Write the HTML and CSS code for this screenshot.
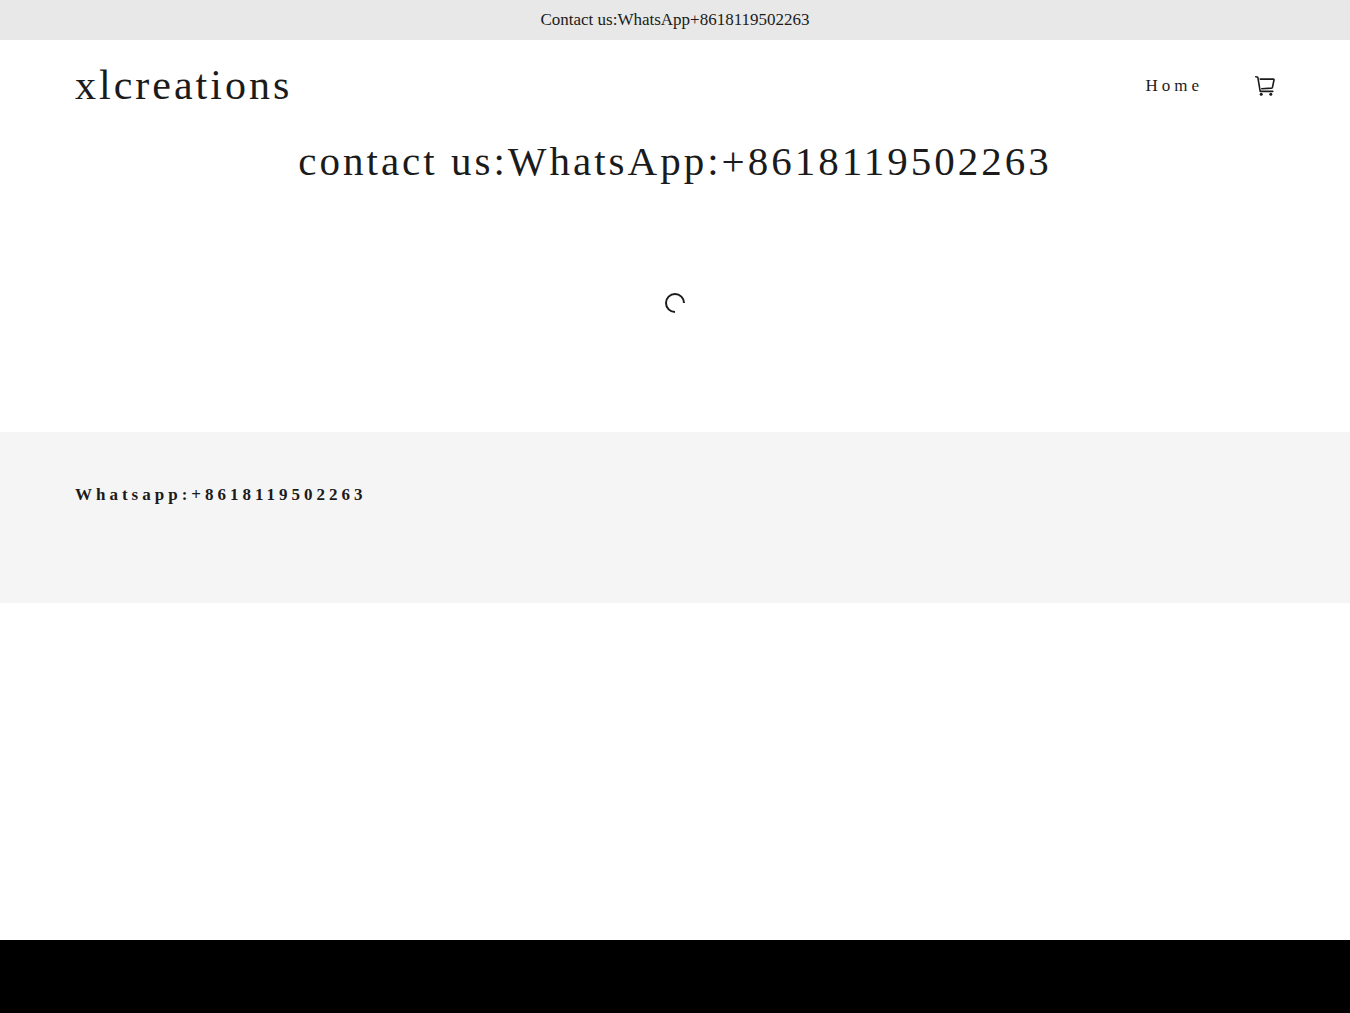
FILE: index.html
```
<!DOCTYPE html>
<html lang="en">
<head>
    <meta charset="UTF-8">
    <meta name="viewport" content="width=device-width, initial-scale=1.0">
    <title>xlcreations</title>
    <link rel="stylesheet" href="styles.css">
</head>
<body>

    <div class="announcement">Contact us:WhatsApp+8618119502263</div>

    <header class="header">
        <a class="logo" href="#">xlcreations</a>
        <nav class="nav">
            <a class="nav-link" href="#">Home</a>
            <button class="cart-button" type="button" aria-label="Cart">
                <svg width="20" height="20" viewBox="0 0 20 20" fill="none" stroke="#1b1b1b" stroke-width="1.6" stroke-linecap="round" stroke-linejoin="round">
                    <path d="M0.8 0.8L2.8 1.2L5.2 15.4H17.8"/>
                    <path d="M5.2 3.1H18.4Q19.2 3.1 19 4L17.5 11.2Q17.3 12 16.5 12.1L6.8 12.7"/>
                    <circle cx="6.2" cy="18.3" r="1.5" fill="#1b1b1b" stroke="none"/>
                    <circle cx="15.8" cy="18.3" r="1.5" fill="#1b1b1b" stroke="none"/>
                </svg>
            </button>
        </nav>
    </header>

    <main class="main">
        <h1 class="title">contact us:WhatsApp:+8618119502263</h1>
        <div class="loading">
            <svg width="20" height="20" viewBox="0 0 20 20" fill="none" stroke="#1b1b1b" stroke-width="2">
                <path d="M10 19A9 9 0 1 1 19 10"/>
            </svg>
        </div>
    </main>

    <footer class="footer">
        <h2 class="footer-title">Whatsapp:+8618119502263</h2>
    </footer>

    <div class="bottom-bar"></div>

</body>
</html>
```
FILE: styles.css
```
* {
    box-sizing: border-box;
}
body {
    display: flex;
    flex-direction: column;
    min-height: 100vh;
    margin: 0;
    background-color: #fff;
    color: #1b1b1b;
    font-family: "Liberation Serif", "Times New Roman", serif;
    font-size: 17px;
}
.announcement {
    padding: 8px 20px;
    background-color: #e8e8e8;
    line-height: 24px;
    text-align: center;
}
.header {
    display: flex;
    align-items: center;
    justify-content: space-between;
    padding: 20px 75px;
}
.logo {
    color: inherit;
    font-size: 42px;
    line-height: 50px;
    letter-spacing: 3px;
    text-decoration: none;
}
.nav {
    display: flex;
    align-items: center;
    gap: 52px;
    padding-top: 2px;
}
.nav-link {
    color: inherit;
    letter-spacing: 4px;
    text-decoration: none;
}
.cart-button {
    display: flex;
    padding: 0;
    border: 0;
    background: none;
    cursor: pointer;
}
.title {
    margin: 0;
    padding: 6px 20px;
    font-size: 41px;
    font-weight: 400;
    line-height: 50px;
    letter-spacing: 3px;
    text-align: center;
}
.loading {
    display: flex;
    justify-content: center;
    padding: 101px 0 119px;
}
.footer {
    padding: 51px 75px 96px;
    background-color: #f5f5f5;
}
.footer-title {
    margin: 0;
    font-size: 17px;
    font-weight: 700;
    line-height: 24px;
    letter-spacing: 4px;
}
.bottom-bar {
    height: 73px;
    margin-top: auto;
    background-color: #000;
}
```
